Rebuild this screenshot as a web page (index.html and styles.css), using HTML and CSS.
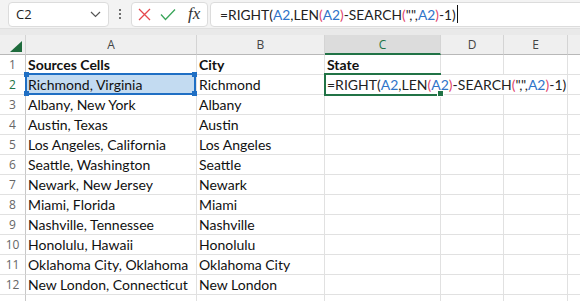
FILE: index.html
```html
<!DOCTYPE html>
<html>
<head>
  <title>State from address</title>
  <link rel="stylesheet" href="styles.css">
</head>
<body>
  <div class="toolbar">
    <div class="name-box">
      <span>C2</span>
      <svg class="chevron" width="11" height="7" viewBox="0 0 11 7"><path d="M1 1l4.5 4.5L10 1" fill="none" stroke="#555" stroke-width="1.2"/></svg>
    </div>
    <div class="dots"><i></i><i></i><i></i></div>
    <div class="fx-box">
      <svg width="13" height="13" viewBox="0 0 13 13"><path d="M1 1l11 11M12 1L1 12" stroke="#e5484d" stroke-width="1.3" fill="none"/></svg>
      <svg width="16" height="13" viewBox="0 0 16 13"><path d="M1 6.5l4.5 5L15 1.5" stroke="#3aa55a" stroke-width="1.3" fill="none"/></svg>
      <span class="fx">fx</span>
    </div>
    <div class="formula-box">
      <span class="formula">=RIGHT(<b class="ref">A2</b>,LEN<b class="p2">(</b><b class="ref">A2</b><b class="p2">)</b>-SEARCH<b class="p2">(</b>",",<b class="ref">A2</b><b class="p2">)</b>-1)</span><span class="caret"></span>
    </div>
  </div>

  <div class="sheet">
    <div class="corner"><span class="tri"></span></div>
    <div class="col-head">A</div>
    <div class="col-head">B</div>
    <div class="col-head active">C</div>
    <div class="col-head">D</div>
    <div class="col-head">E</div>
    <div class="col-head last"></div>

    <div class="row-head">1</div>
    <div class="cell bold">Sources Cells</div>
    <div class="cell bold">City</div>
    <div class="cell bold">State</div>
    <div class="cell"></div>
    <div class="cell"></div>
    <div class="cell last"></div>

    <div class="row-head active">2</div>
    <div class="cell ref-cell">Richmond, Virginia<span class="ref-frame"><i class="h tl"></i><i class="h tr"></i><i class="h bl"></i><i class="h br"></i></span></div>
    <div class="cell">Richmond</div>
    <div class="cell edit-cell"><span class="formula">=RIGHT(<b class="ref">A2</b>,LEN<b class="p2">(</b><b class="ref">A2</b><b class="p2">)</b>-SEARCH<b class="p2">(</b>",",<b class="ref">A2</b><b class="p2">)</b>-1)</span><span class="active-frame"><i class="fill"></i></span></div>
    <div class="cell last"></div>

    <div class="row-head">3</div>
    <div class="cell">Albany, New York</div>
    <div class="cell">Albany</div>
    <div class="cell"></div><div class="cell"></div><div class="cell"></div><div class="cell last"></div>

    <div class="row-head">4</div>
    <div class="cell">Austin, Texas</div>
    <div class="cell">Austin</div>
    <div class="cell"></div><div class="cell"></div><div class="cell"></div><div class="cell last"></div>

    <div class="row-head">5</div>
    <div class="cell">Los Angeles, California</div>
    <div class="cell">Los Angeles</div>
    <div class="cell"></div><div class="cell"></div><div class="cell"></div><div class="cell last"></div>

    <div class="row-head">6</div>
    <div class="cell">Seattle, Washington</div>
    <div class="cell">Seattle</div>
    <div class="cell"></div><div class="cell"></div><div class="cell"></div><div class="cell last"></div>

    <div class="row-head">7</div>
    <div class="cell">Newark, New Jersey</div>
    <div class="cell">Newark</div>
    <div class="cell"></div><div class="cell"></div><div class="cell"></div><div class="cell last"></div>

    <div class="row-head">8</div>
    <div class="cell">Miami, Florida</div>
    <div class="cell">Miami</div>
    <div class="cell"></div><div class="cell"></div><div class="cell"></div><div class="cell last"></div>

    <div class="row-head">9</div>
    <div class="cell">Nashville, Tennessee</div>
    <div class="cell">Nashville</div>
    <div class="cell"></div><div class="cell"></div><div class="cell"></div><div class="cell last"></div>

    <div class="row-head">10</div>
    <div class="cell">Honolulu, Hawaii</div>
    <div class="cell">Honolulu</div>
    <div class="cell"></div><div class="cell"></div><div class="cell"></div><div class="cell last"></div>

    <div class="row-head">11</div>
    <div class="cell">Oklahoma City, Oklahoma</div>
    <div class="cell">Oklahoma City</div>
    <div class="cell"></div><div class="cell"></div><div class="cell"></div><div class="cell last"></div>

    <div class="row-head">12</div>
    <div class="cell">New London, Connecticut</div>
    <div class="cell">New London</div>
    <div class="cell"></div><div class="cell"></div><div class="cell"></div><div class="cell last"></div>

    <div class="row-head"></div>
    <div class="cell"></div><div class="cell"></div><div class="cell"></div><div class="cell"></div><div class="cell"></div><div class="cell last"></div>
  </div>
</body>
</html>
```

FILE: styles.css
```css
body {
  margin: 0;
  width: 580px;
  height: 301px;
  overflow: hidden;
  background-color: #ffffff;
  font-family: Lato, "Liberation Sans", sans-serif;
}
.toolbar {
  display: flex;
  align-items: center;
  height: 29px;
  padding: 0 0 0 8px;
  background-color: #f3f3f3;
  border-bottom: 1px solid #e0e0e0;
  box-sizing: border-box;
}
.name-box, .fx-box, .formula-box {
  height: 25px;
  box-sizing: border-box;
  background-color: #ffffff;
  border: 1px solid #dcdcdc;
  border-radius: 4px;
  display: flex;
  align-items: center;
}
.name-box {
  width: 101px;
  padding: 0 7px 0 7px;
  justify-content: space-between;
  font-family: "Open Sans", sans-serif;
  font-size: 13px;
  color: #222;
}
.dots {
  width: 22px;
  display: flex;
  flex-direction: column;
  align-items: center;
  gap: 2px;
}
.dots i {
  width: 2px;
  height: 2px;
  background-color: #444;
  border-radius: 1px;
}
.fx-box {
  width: 77px;
  padding: 0 6px 0 6px;
  gap: 9px;
}
.fx {
  font-family: "Liberation Serif", serif;
  font-style: italic;
  font-size: 17px;
  color: #333;
  margin-left: 3px;
}
.formula-box {
  flex: 1;
  margin-left: 2px;
  margin-right: -6px;
  padding-left: 9px;
}
.formula {
  font-size: 13.8px;
  color: #222;
  white-space: nowrap;
}
.formula b {
  font-weight: normal;
}
.ref {
  color: #2f74c9;
}
.p2 {
  color: #e0456d;
}
.caret {
  width: 1px;
  height: 18px;
  background-color: #111;
  margin-left: 1px;
}

.sheet {
  display: grid;
  grid-template-columns: 26px 171px 128px 116px 63px 64px 1fr;
  grid-auto-rows: 20px;
  padding-top: 6px;
  background-color: #e9e9e9;
}
.corner, .col-head {
  background-color: #efefef;
  border-right: 1px solid #d4d4d4;
  border-bottom: 1px solid #b8b8b8;
  box-sizing: border-box;
}
.corner {
  position: relative;
}
.tri {
  position: absolute;
  left: 10px;
  top: 6px;
  width: 0;
  height: 0;
  border-left: 12px solid transparent;
  border-bottom: 11px solid #1e6b3c;
}
.col-head {
  font-family: "Open Sans", sans-serif;
  font-size: 12px;
  color: #444;
  text-align: center;
  line-height: 19px;
}
.col-head.active {
  background-color: #dcdcdc;
  color: #217346;
  border-bottom: 2px solid #217346;
}
.col-head.last, .cell.last {
  border-right: none;
}
.row-head {
  background-color: #ffffff;
  border-right: 1px solid #c8c8c8;
  border-bottom: 1px solid #e1e1e1;
  box-sizing: border-box;
  font-family: "Open Sans", sans-serif;
  font-size: 12px;
  color: #666;
  text-align: center;
  line-height: 19px;
}
.row-head.active {
  color: #217346;
}
.cell {
  background-color: #ffffff;
  border-right: 1px solid #e1e1e1;
  border-bottom: 1px solid #e1e1e1;
  box-sizing: border-box;
  padding-left: 2px;
  font-size: 14px;
  line-height: 19px;
  color: #111;
  white-space: nowrap;
}
.cell .formula {
  font-size: 14px;
}
.bold {
  font-weight: bold;
}
.ref-cell {
  position: relative;
  background-color: #c3dbf1;
}
.ref-frame {
  position: absolute;
  left: -1px;
  top: -2px;
  right: 0;
  bottom: -1px;
  border: 2px solid #1f6fc4;
}
.h {
  position: absolute;
  width: 5px;
  height: 5px;
  background-color: #1f6fc4;
}
.tl { left: -3px; top: -3px; }
.tr { right: -3px; top: -3px; }
.bl { left: -3px; bottom: -3px; }
.br { right: -3px; bottom: -3px; }
.edit-cell {
  grid-column: span 3;
  position: relative;
  overflow: visible;
}
.active-frame {
  position: absolute;
  left: -1px;
  top: -2px;
  width: 115px;
  bottom: -2px;
  border: 2px solid #217346;
  border-right: none;
}
.fill {
  position: absolute;
  right: -3px;
  bottom: -3px;
  width: 5px;
  height: 5px;
  background-color: #217346;
  border: 1px solid #ffffff;
}
```
